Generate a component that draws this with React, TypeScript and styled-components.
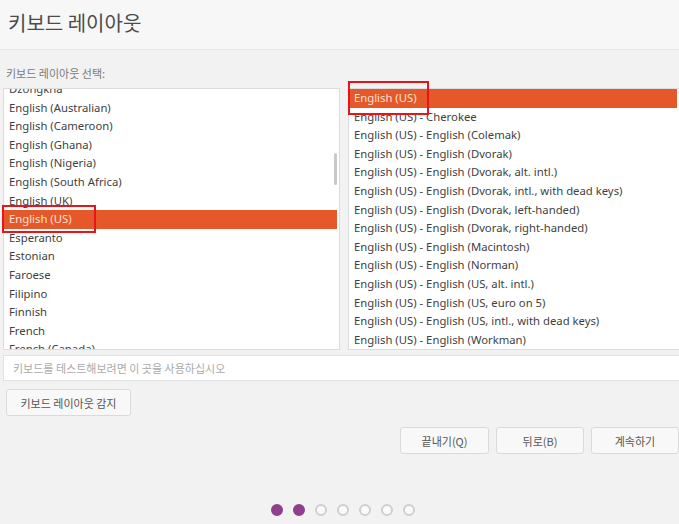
import React from "react";
import styled, { createGlobalStyle } from "styled-components";

const Global = createGlobalStyle`
  html, body { margin: 0; padding: 0; }
  body {
    width: 679px; height: 524px; overflow: hidden;
    background: #f2f2f2;
    font-family: "Noto Sans", "Noto Sans CJK KR", sans-serif;
    color: #3c3c3c;
  }
`;

const Page = styled.div`
  width: 679px;
  height: 524px;
  position: relative;
  display: flex;
  flex-direction: column;
  background: #f2f2f2;
`;

const Header = styled.header`
  height: 50px;
  box-sizing: border-box;
  background: #f7f7f7;
  border-bottom: 1px solid #e6e6e6;
  display: flex;
  align-items: center;
  padding: 0 0 4px 8px;
`;

const Title = styled.h1`
  margin: 0;
  font-size: 20px;
  font-weight: 400;
  color: #4b4b4b;
  font-family: "Noto Sans CJK KR", sans-serif;
`;

const Body = styled.main`
  display: flex;
  flex-direction: column;
  padding: 18px 0 0 3px;
`;

const Label = styled.div`
  font-size: 11px;
  color: #7a7a7a;
  font-family: "Noto Sans CJK KR", sans-serif;
  height: 20px;
  padding-left: 3px;
  line-height: 10px;
`;

const Lists = styled.div`
  display: grid;
  grid-template-columns: 337px 331px;
  column-gap: 8px;
  height: 262px;
`;

const ListBox = styled.div<{ $offset: number }>`
  position: relative;
  background: #fff;
  border: 1px solid #dcdcdc;
  border-right: ${(p) => (p.$offset ? "1px solid #dcdcdc" : "none")};
  overflow: hidden;
  & > div:first-child {
    margin-top: ${(p) => -p.$offset}px;
  }
`;

const Rows = styled.div`
  display: flex;
  flex-direction: column;
`;

const Row = styled.div<{ $sel?: boolean }>`
  height: 18.6px;
  line-height: 18.6px;
  font-size: 11.3px;
  padding-left: 5px;
  white-space: nowrap;
  color: ${(p) => (p.$sel ? "#fbe3d6" : "#3f3f3f")};
  background: ${(p) => (p.$sel ? "#e4582a" : "transparent")};
  margin-right: ${(p) => (p.$sel ? "2px" : "0")};
`;

const Scroll = styled.div`
  position: absolute;
  right: 2px;
  top: 64px;
  width: 3px;
  height: 32px;
  border-radius: 2px;
  background: #c9c9c9;
`;

const Input = styled.div`
  margin-top: 5px;
  height: 26px;
  box-sizing: border-box;
  background: #fff;
  border: 1px solid #e2e2e2;
  border-right: none;
  font-size: 11px;
  color: #aaa;
  font-family: "Noto Sans CJK KR", sans-serif;
  display: flex;
  align-items: center;
  padding-left: 9px;
`;

const Button = styled.button<{ $w: number }>`
  width: ${(p) => p.$w}px;
  height: 27px;
  box-sizing: border-box;
  background: #f8f8f8;
  border: 1px solid #dadada;
  border-radius: 3px;
  font-family: "Noto Sans CJK KR", sans-serif;
  font-size: 11px;
  color: #555;
  padding: 0;
`;

const DetectRow = styled.div`
  margin-top: 8px;
  padding-left: 3px;
  display: flex;
`;

const Footer = styled.div`
  margin-top: 11px;
  display: flex;
  justify-content: flex-end;
  gap: 7px;
`;

const Dots = styled.div`
  position: absolute;
  left: 0;
  right: 0;
  top: 504px;
  display: flex;
  justify-content: center;
  gap: 10px;
  padding-left: 7px;
`;

const Dot = styled.span<{ $on?: boolean }>`
  width: 12px;
  height: 12px;
  box-sizing: border-box;
  border-radius: 50%;
  background: ${(p) => (p.$on ? "#8f3f8b" : "#fafafa")};
  border: 2px solid ${(p) => (p.$on ? "#8f3f8b" : "#cfcfcf")};
`;

const Mark = styled.div<{ $x: number; $y: number; $w: number; $h: number }>`
  position: absolute;
  left: ${(p) => p.$x}px;
  top: ${(p) => p.$y}px;
  width: ${(p) => p.$w}px;
  height: ${(p) => p.$h}px;
  box-sizing: border-box;
  border: 2px solid #e8141c;
  pointer-events: none;
`;

const left = [
  "Dzongkha",
  "English (Australian)",
  "English (Cameroon)",
  "English (Ghana)",
  "English (Nigeria)",
  "English (South Africa)",
  "English (UK)",
  "English (US)",
  "Esperanto",
  "Estonian",
  "Faroese",
  "Filipino",
  "Finnish",
  "French",
  "French (Canada)",
];

const right = [
  "English (US)",
  "English (US) - Cherokee",
  "English (US) - English (Colemak)",
  "English (US) - English (Dvorak)",
  "English (US) - English (Dvorak, alt. intl.)",
  "English (US) - English (Dvorak, intl., with dead keys)",
  "English (US) - English (Dvorak, left-handed)",
  "English (US) - English (Dvorak, right-handed)",
  "English (US) - English (Macintosh)",
  "English (US) - English (Norman)",
  "English (US) - English (US, alt. intl.)",
  "English (US) - English (US, euro on 5)",
  "English (US) - English (US, intl., with dead keys)",
  "English (US) - English (Workman)",
];

export default function App() {
  return (
    <Page>
      <Global />
      <Header>
        <Title>키보드 레이아웃</Title>
      </Header>
      <Body>
        <Label>키보드 레이아웃 선택:</Label>
        <Lists>
          <ListBox $offset={9}>
            <Rows>
              {left.map((t) => (
                <Row key={t} $sel={t === "English (US)"}>
                  {t}
                </Row>
              ))}
            </Rows>
            <Scroll />
          </ListBox>
          <ListBox $offset={0}>
            <Rows>
              {right.map((t, i) => (
                <Row key={t} $sel={i === 0}>
                  {t}
                </Row>
              ))}
            </Rows>
          </ListBox>
        </Lists>
        <Input>키보드를 테스트해보려면 이 곳을 사용하십시오</Input>
        <DetectRow>
          <Button $w={125}>키보드 레이아웃 감지</Button>
        </DetectRow>
        <Footer>
          <Button $w={89}>끝내기(Q)</Button>
          <Button $w={88}>뒤로(B)</Button>
          <Button $w={88}>계속하기</Button>
        </Footer>
      </Body>
      <Dots>
        <Dot $on />
        <Dot $on />
        <Dot />
        <Dot />
        <Dot />
        <Dot />
        <Dot />
      </Dots>
      <Mark $x={2} $y={205} $w={94} $h={28} />
      <Mark $x={348} $y={81} $w={81} $h={34} />
    </Page>
  );
}
